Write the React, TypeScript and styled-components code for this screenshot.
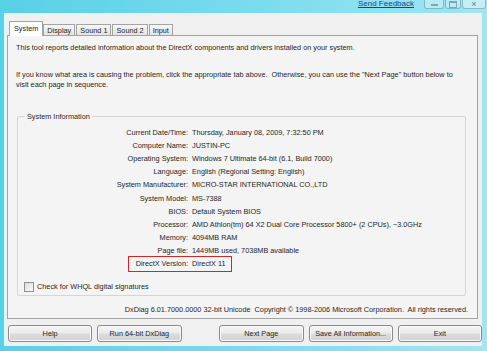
import React from "react"
import styled, { createGlobalStyle } from "styled-components"

const GlobalStyle = createGlobalStyle`
  html, body {
    margin: 0;
    padding: 0;
    background: #6fd9ec;
  }
  body {
    font-family: "Liberation Sans", Arial, sans-serif;
    font-size: 7.3px;
    color: #262626;
  }
`

const tabs = ["System", "Display", "Sound 1", "Sound 2", "Input"]

const rows: [string, string][] = [
  ["Current Date/Time:", "Thursday, January 08, 2009, 7:32:50 PM"],
  ["Computer Name:", "JUSTIN-PC"],
  ["Operating System:", "Windows 7 Ultimate 64-bit (6.1, Build 7000)"],
  ["Language:", "English (Regional Setting: English)"],
  ["System Manufacturer:", "MICRO-STAR INTERNATIONAL CO.,LTD"],
  ["System Model:", "MS-7388"],
  ["BIOS:", "Default System BIOS"],
  ["Processor:", "AMD Athlon(tm) 64 X2 Dual Core Processor 5800+ (2 CPUs), ~3.0GHz"],
  ["Memory:", "4094MB RAM"],
  ["Page file:", "1449MB used, 7038MB available"],
]

const buttons = ["Help", "Run 64-bit DxDiag", null, "Next Page", "Save All Information...", "Exit"]

export default function App() {
  return (
    <>
      <GlobalStyle />
      <Window>
        <TitleBar>
          <Feedback>Send Feedback</Feedback>
          <WinButtons>
            <WinButton $w={20}>
              <MinGlyph />
            </WinButton>
            <WinButton $w={16}>
              <MaxGlyph />
            </WinButton>
            <WinButton $w={24} $close>
              ×
            </WinButton>
          </WinButtons>
        </TitleBar>

        <Body>
          <TabStrip>
            {tabs.map((t, i) => (
              <Tab key={t} $active={i === 0}>
                {t}
              </Tab>
            ))}
          </TabStrip>

          <Panel>
            <Para>
              This tool reports detailed information about the DirectX components and drivers installed on your system.
            </Para>
            <Para $gap={16}>
              If you know what area is causing the problem, click the appropriate tab above.&nbsp; Otherwise, you can use
              the "Next Page" button below to
              <br />
              visit each page in sequence.
            </Para>

            <Group>
              <Legend>System Information</Legend>
              <InfoGrid>
                {rows.map(([k, v]) => (
                  <React.Fragment key={k}>
                    <Label>{k}</Label>
                    <Value>{v}</Value>
                  </React.Fragment>
                ))}
                <Highlight>
                  <Label>DirectX Version:</Label>
                  <Value>DirectX 11</Value>
                </Highlight>
              </InfoGrid>
              <CheckRow>
                <CheckBox />
                Check for WHQL digital signatures
              </CheckRow>
            </Group>

            <Footer>
              DxDiag 6.01.7000.0000 32-bit Unicode&nbsp; Copyright © 1998-2006 Microsoft Corporation.&nbsp; All rights
              reserved.
            </Footer>
          </Panel>

          <ButtonRow>
            {buttons.map((b, i) => (b ? <Button key={b}>{b}</Button> : <Spacer key={i} />))}
          </ButtonRow>
        </Body>
      </Window>
    </>
  )
}

const Window = styled.div`
  width: 487px;
  height: 351px;
  display: flex;
  flex-direction: column;
  background: linear-gradient(90deg, #58d0e6 0%, #78dbee 50%, #9fe6f3 100%);
  overflow: hidden;
`

const TitleBar = styled.div`
  height: 13px;
  display: flex;
  justify-content: flex-end;
  align-items: flex-start;
  flex-shrink: 0;
`

const Feedback = styled.span`
  color: #1b3f8c;
  text-decoration: underline;
  font-size: 8px;
  line-height: 9px;
  margin-right: 10px;
  margin-top: -1px;
`

const WinButtons = styled.div`
  display: flex;
  gap: 1px;
  margin-right: 1px;
`

const WinButton = styled.div<{ $w: number; $close?: boolean }>`
  box-sizing: border-box;
  width: ${(p) => p.$w}px;
  height: 9px;
  border: 1px solid rgba(70, 120, 140, 0.45);
  border-top: none;
  border-radius: 0 0 3px 3px;
  background: ${(p) => (p.$close ? "rgba(230, 245, 250, 0.55)" : "rgba(220, 245, 250, 0.45)")};
  display: flex;
  align-items: center;
  justify-content: center;
  color: #5b7f8b;
  font-size: 9px;
  line-height: 8px;
`

const MinGlyph = styled.div`
  width: 7px;
  height: 2px;
  background: #7fa6b2;
  margin-top: 2px;
`

const MaxGlyph = styled.div`
  width: 6px;
  height: 4px;
  border: 1px solid #7fa6b2;
  border-top-width: 2px;
`

const Body = styled.div`
  flex: 1;
  margin: 0 5px 5px 4px;
  background: #f0f0f0;
  border-left: 1px solid #e4f4f8;
  display: flex;
  flex-direction: column;
`

const TabStrip = styled.div`
  display: flex;
  align-items: flex-end;
  height: 22px;
  padding-left: 5px;
  gap: 1px;
`

const Tab = styled.div<{ $active?: boolean }>`
  height: ${(p) => (p.$active ? 15 : 12)}px;
  padding: ${(p) => (p.$active ? "2px 4px 0" : "0 3px")};
  margin: 0 ${(p) => (p.$active ? -1 : 0)}px -1px;
  border: 1px solid #a3a3a3;
  border-bottom: ${(p) => (p.$active ? "none" : "1px solid #a3a3a3")};
  background: ${(p) => (p.$active ? "#ffffff" : "linear-gradient(#f6f6f6, #e3e3e3)")};
  display: flex;
  align-items: ${(p) => (p.$active ? "flex-start" : "center")};
  box-sizing: border-box;
  position: relative;
  z-index: ${(p) => (p.$active ? 1 : 0)};
`

const Panel = styled.div`
  margin: 0 4px 0 2px;
  height: 284px;
  box-sizing: border-box;
  border: 1px solid #a3a3a3;
  background: #f4f4f4;
  padding: 7px 8px 0 8px;
  display: flex;
  flex-direction: column;
`

const Para = styled.p<{ $gap?: number }>`
  margin: ${(p) => p.$gap ?? 0}px 0 0;
  line-height: 10.5px;
`

const Group = styled.fieldset`
  margin: 21px 3px 0 1px;
  padding: 5px 0 4px 6px;
  border: 1px solid #d5d5d5;
  border-radius: 2px;
  height: 184px;
  box-sizing: border-box;
  display: flex;
  flex-direction: column;
`

const Legend = styled.legend`
  padding: 0 2px;
  margin-left: 1px;
  line-height: 9px;
`

const InfoGrid = styled.div`
  display: grid;
  grid-template-columns: 164px 1fr;
  column-gap: 4px;
  grid-auto-rows: 13.2px;
  align-items: center;
`

const Label = styled.span`
  text-align: right;
  white-space: nowrap;
`

const Value = styled.span`
  white-space: nowrap;
`

const Highlight = styled.div`
  grid-column: 1 / -1;
  display: flex;
  align-items: center;
  gap: 4px;
  position: relative;

  & > ${Label} {
    width: 164px;
    flex-shrink: 0;
  }

  &::after {
    content: "";
    position: absolute;
    left: 104px;
    width: 104px;
    top: -3px;
    bottom: -4px;
    box-sizing: border-box;
    border: 1.5px solid #cc2a2a;
  }
`

const CheckRow = styled.label`
  display: flex;
  align-items: center;
  gap: 3px;
  margin-top: 11px;
`

const CheckBox = styled.span`
  width: 8px;
  height: 8px;
  border: 1px solid #8f8f8f;
  background: linear-gradient(135deg, #dcdcdc, #fbfbfb);
`

const Footer = styled.div`
  margin-top: auto;
  margin-bottom: 4px;
  text-align: right;
  padding-right: 1px;
`

const ButtonRow = styled.div`
  display: flex;
  gap: 5px;
  padding: 6px 0 0 3px;
`

const Button = styled.button`
  width: 85px;
  height: 17px;
  padding: 0;
  font: inherit;
  color: #262626;
  border: 1px solid #8a8a8a;
  border-radius: 3px;
  background: linear-gradient(#f4f4f4 0%, #ebebeb 48%, #dcdcdc 52%, #d2d2d2 100%);
  box-shadow: inset 0 0 0 1px #fafafa;
`

const Spacer = styled.div`
  width: 28px;
`
